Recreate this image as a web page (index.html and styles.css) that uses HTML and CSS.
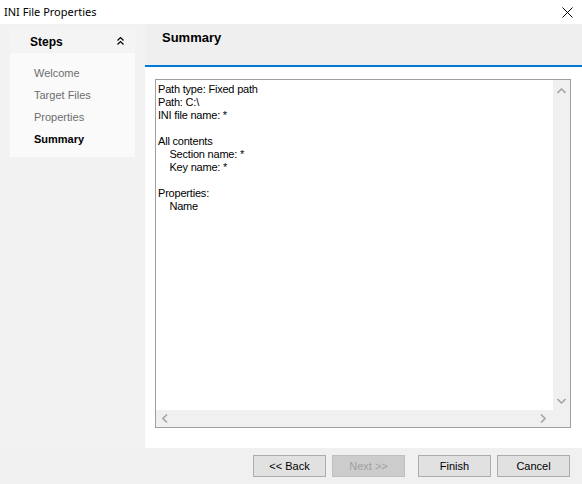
FILE: index.html
```html
<!DOCTYPE html>
<html>
<head>
<meta charset="utf-8">
<link rel="stylesheet" href="styles.css">
</head>
<body>
<div class="window">
  <div class="titlebar">
    <span class="title">INI File Properties</span>
    <svg class="close" width="11" height="11" viewBox="0 0 11 11"><path d="M0.5 0.5 L10.5 10.5 M10.5 0.5 L0.5 10.5" stroke="#000" stroke-width="1"/></svg>
  </div>
  <div class="main">
    <div class="sidebar">
      <div class="card">
        <div class="card-head">
          <span class="card-title">Steps</span>
          <svg class="collapse" width="7" height="8" viewBox="0 0 7 8"><path d="M0.5 3.5 L3.5 0.5 L6.5 3.5 M0.5 7.5 L3.5 4.5 L6.5 7.5" stroke="#000" stroke-width="1.2" fill="none"/></svg>
        </div>
        <ul class="steps">
          <li>Welcome</li>
          <li>Target Files</li>
          <li>Properties</li>
          <li class="active">Summary</li>
        </ul>
      </div>
    </div>
    <div class="panel">
      <div class="panel-head">Summary</div>
      <div class="panel-body">
        <div class="textbox">
          <div class="text">Path type: Fixed path
Path: C:\
INI file name: *

All contents
    Section name: *
    Key name: *

Properties:
    Name</div>
          <div class="vscroll">
            <svg width="9" height="6" viewBox="0 0 9 6"><path d="M0.5 5 L4.5 1 L8.5 5" stroke="#a6a6a6" stroke-width="1.6" fill="none"/></svg>
            <svg width="9" height="6" viewBox="0 0 9 6"><path d="M0.5 1 L4.5 5 L8.5 1" stroke="#a6a6a6" stroke-width="1.6" fill="none"/></svg>
          </div>
          <div class="hscroll">
            <svg width="6" height="9" viewBox="0 0 6 9"><path d="M5 0.5 L1 4.5 L5 8.5" stroke="#a6a6a6" stroke-width="1.6" fill="none"/></svg>
            <svg width="6" height="9" viewBox="0 0 6 9"><path d="M1 0.5 L5 4.5 L1 8.5" stroke="#a6a6a6" stroke-width="1.6" fill="none"/></svg>
          </div>
          <div class="corner"></div>
        </div>
      </div>
    </div>
  </div>
  <div class="footer">
    <button class="btn">&lt;&lt; Back</button>
    <button class="btn disabled">Next &gt;&gt;</button>
    <button class="btn finish">Finish</button>
    <button class="btn">Cancel</button>
  </div>
</div>
</body>
</html>
```

FILE: styles.css
```css
html, body {
  margin: 0;
  padding: 0;
  background: #ffffff;
}
.window {
  width: 582px;
  height: 484px;
  display: flex;
  flex-direction: column;
  font-family: "Liberation Sans", Arial, sans-serif;
  color: #000;
  overflow: hidden;
}
.titlebar {
  height: 24px;
  flex: 0 0 24px;
  background: #ffffff;
  display: flex;
  align-items: center;
  justify-content: space-between;
  padding: 0 9px 0 4px;
}
.title {
  font-family: "Noto Sans", "Open Sans", sans-serif;
  font-size: 11px;
  color: #000;
  margin-top: -1px;
}
.close {
  display: block;
  margin-top: 1px;
}
.main {
  flex: 0 0 424px;
  display: flex;
}
.sidebar {
  width: 145px;
  flex: 0 0 145px;
  background: #f2f2f2;
  padding: 5px 10px 0 10px;
  box-sizing: border-box;
}
.card {
  background: #fafafa;
  padding-bottom: 7px;
}
.card-head {
  height: 24px;
  background: #f4f4f4;
  display: flex;
  align-items: center;
  justify-content: space-between;
  padding: 0 11px 0 20px;
}
.card-title {
  font-weight: bold;
  font-size: 12px;
  margin-top: 1px;
}
.collapse {
  display: block;
}
.steps {
  list-style: none;
  margin: 0;
  padding: 9px 0 0 24px;
}
.steps li {
  height: 22px;
  line-height: 22px;
  font-size: 11px;
  color: #6d6d6d;
}
.steps li.active {
  color: #000;
  font-weight: bold;
}
.panel {
  flex: 1;
  display: flex;
  flex-direction: column;
  background: #ffffff;
}
.panel-head {
  height: 41px;
  flex: 0 0 41px;
  background: #efefef;
  border-bottom: 2px solid #0078d7;
  box-sizing: content-box;
  font-weight: bold;
  font-size: 13px;
  padding-left: 17px;
  line-height: 28px;
}
.panel-body {
  flex: 1;
  padding: 12px 11px 20px 10px;
  display: flex;
}
.textbox {
  flex: 1;
  border: 1px solid #a0a0a0;
  display: grid;
  grid-template-columns: 1fr 17px;
  grid-template-rows: 1fr 17px;
  background: #fff;
}
.text {
  white-space: pre;
  font-size: 11px;
  letter-spacing: -0.2px;
  line-height: 13px;
  padding: 3px 2px;
}
.vscroll {
  background: #f0f0f0;
  display: flex;
  flex-direction: column;
  justify-content: space-between;
  align-items: center;
  padding: 8px 0 6px 0;
}
.vscroll svg, .hscroll svg {
  display: block;
}
.hscroll {
  background: #f0f0f0;
  display: flex;
  justify-content: space-between;
  align-items: center;
  padding: 0 7px 0 6px;
}
.corner {
  background: #f0f0f0;
}
.footer {
  flex: 0 0 35px;
  background: #f0f0f0;
  border-bottom: 1px solid #a9a9a9;
  display: flex;
  justify-content: flex-end;
  align-items: flex-start;
  padding: 7px 12px 0 0;
  box-sizing: content-box;
  height: 28px;
}
.btn {
  width: 73px;
  height: 22px;
  margin: 0 0 0 6px;
  padding: 0;
  background: #e1e1e1;
  border: 1px solid #adadad;
  font-family: "Liberation Sans", Arial, sans-serif;
  font-size: 11px;
  color: #000;
}
.btn.disabled {
  background: #cccccc;
  border-color: #bfbfbf;
  color: #a0a0a0;
}
.btn.finish {
  margin-left: 13px;
}
```
